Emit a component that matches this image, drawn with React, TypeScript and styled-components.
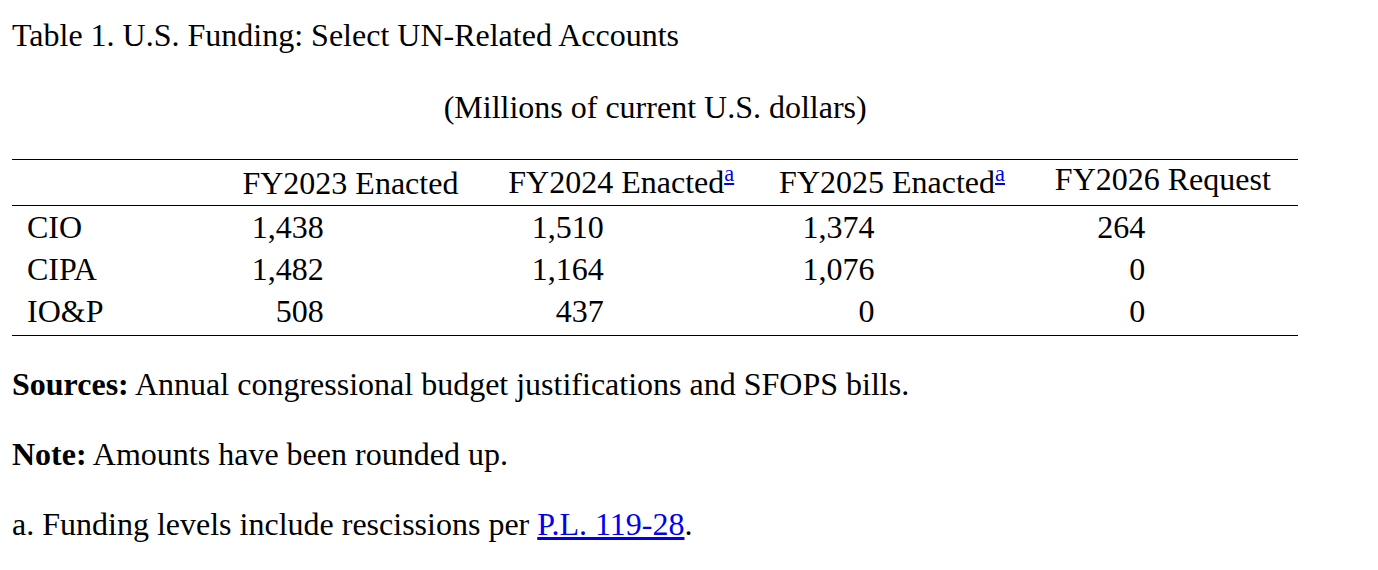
import React, { FC } from "react";
import styled, { createGlobalStyle } from "styled-components";

interface Row {
  label: string;
  values: string[];
}

interface Column {
  title: string;
  note?: boolean;
  low?: boolean;
  pad: number;
}

const columns: Column[] = [
  { title: "FY2023 Enacted", low: true, pad: 162 },
  { title: "FY2024 Enacted", note: true, pad: 153 },
  { title: "FY2025 Enacted", note: true, pad: 153 },
  { title: "FY2026 Request", pad: 153 },
];

const rows: Row[] = [
  { label: "CIO", values: ["1,438", "1,510", "1,374", "264"] },
  { label: "CIPA", values: ["1,482", "1,164", "1,076", "0"] },
  { label: "IO&P", values: ["508", "437", "0", "0"] },
];

const App: FC = () => {
  return (
    <Page>
      <GlobalStyle />
      <Title>Table 1. U.S. Funding: Select UN-Related Accounts</Title>
      <Table>
        <Caption>(Millions of current U.S. dollars)</Caption>
        <colgroup>
          <col style={{ width: "203px" }} />
          {columns.map((c) => (
            <col key={c.title} />
          ))}
        </colgroup>
        <thead>
          <tr>
            <TH />
            {columns.map((c) => (
              <TH key={c.title} low={c.low}>
                {c.title}
                {c.note && (
                  <Sup>
                    <Link href="#note-a">a</Link>
                  </Sup>
                )}
              </TH>
            ))}
          </tr>
        </thead>
        <tbody>
          {rows.map((row) => (
            <TR key={row.label}>
              <Label>{row.label}</Label>
              {row.values.map((v, idx) => (
                <Value key={idx} pad={columns[idx].pad}>
                  {v}
                </Value>
              ))}
            </TR>
          ))}
        </tbody>
      </Table>
      <Notes>
        <Note>
          <strong>Sources:</strong> Annual congressional budget justifications
          and SFOPS bills.
        </Note>
        <Note>
          <strong>Note:</strong> Amounts have been rounded up.
        </Note>
        <Note id="note-a">
          a. Funding levels include rescissions per{" "}
          <Link href="#pl-119-28">P.L. 119-28</Link>.
        </Note>
      </Notes>
    </Page>
  );
};

const GlobalStyle = createGlobalStyle`
  body {
    margin: 0;
    background: #fff;
    color: #000;
    font-family: "Liberation Serif", "Times New Roman", serif;
  }
`;

const Page = styled.div`
  padding: 16px 12px;
  font-size: 32px;
  line-height: 38px;
`;

const Title = styled.div`
  margin: 0;
`;

const Table = styled.table`
  width: 95%;
  table-layout: fixed;
  border-collapse: collapse;
  margin: 0;
`;

const Caption = styled.caption`
  padding: 34px 0 33px;
  text-align: center;
  line-height: 38px;
`;

const TH = styled.th<{ low?: boolean }>`
  font-weight: normal;
  text-align: center;
  vertical-align: top;
  line-height: 34px;
  padding: ${(p) => (p.low ? "6px 3px 0" : "2px 3px 6px")};
  border-top: 1px solid #000;
  border-bottom: 1px solid #000;
  white-space: nowrap;
`;

const Sup = styled.sup`
  font-size: 0.7em;
  line-height: 24px;
`;

const Link = styled.a`
  color: #0000ee;
  text-decoration: underline;
`;

const TR = styled.tr`
  &:last-child td {
    padding-bottom: 5px;
    border-bottom: 1px solid #000;
  }
`;

const Label = styled.td`
  text-align: left;
  line-height: 37px;
  padding: 3px 3px 2px 15px;
`;

const Value = styled.td<{ pad: number }>`
  text-align: right;
  line-height: 37px;
  padding: 3px ${(p) => p.pad}px 2px 3px;
`;

const Notes = styled.div`
  display: flex;
  flex-direction: column;
  gap: 32px;
  padding-top: 29px;
`;

const Note = styled.p`
  margin: 0;
`;

export default App;
